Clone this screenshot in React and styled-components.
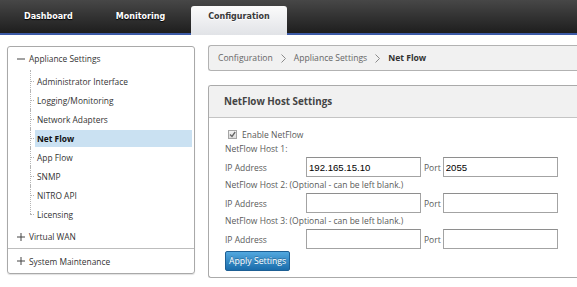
import React from "react";
import styled, { createGlobalStyle } from "styled-components";

const GlobalStyle = createGlobalStyle`
  body {
    margin: 0;
    overflow: hidden;
    background: #ffffff;
    font-family: "Open Sans", "Noto Sans", sans-serif;
  }
`;

const TopBar = styled.div`
  height: 33px;
  border-bottom: 2px solid #3c5aa6;
  background: linear-gradient(#474747, #1e1e1e);
  display: flex;
  align-items: flex-end;
  gap: 9px;
  padding-left: 7px;
`;

const Tab = styled.div`
  height: 22px;
  line-height: 22px;
  padding: 0 17px 7px;
  margin-bottom: -2px;
  font-family: "DejaVu Sans", Verdana, sans-serif;
  font-weight: bold;
  font-size: 8px;
  color: ${(p) => (p.active ? "#3a3a3a" : "#ffffff")};
  border-radius: 3px 3px 0 0;
  background: ${(p) => (p.active ? "linear-gradient(#fbfbfb, #e1e3e7)" : "transparent")};
  text-shadow: ${(p) => (p.active ? "0 1px 0 #ffffff" : "0 1px 1px #000000")};
`;

const Page = styled.div`
  display: flex;
  align-items: flex-start;
  gap: 13px;
  padding: 10px 0 0 7px;
`;

const Sidebar = styled.div`
  box-sizing: border-box;
  flex: 0 0 188px;
  margin-top: 1px;
  border: 1px solid #a9a9a9;
  border-radius: 3px;
  box-shadow: 0 1px 1px rgba(0, 0, 0, 0.12);
  font-size: 8.4px;
  color: #333333;
`;

const GroupRow = styled.div`
  height: ${(p) => p.h}px;
  display: flex;
  align-items: center;
  gap: 4px;
  padding-left: 9px;
  border-bottom: ${(p) => (p.divider ? "1px solid #bdbdbd" : "none")};
`;

const TreeList = styled.div`
  margin: 3px 0 2px;
`;

const TreeItem = styled.div`
  position: relative;
  height: 17px;
  line-height: 17px;
  margin: 0 2px 2px 27px;
  padding-left: 2px;
  background: ${(p) => (p.selected ? "#cae1f2" : "transparent")};
  font-weight: ${(p) => (p.selected ? "bold" : "normal")};
  color: ${(p) => (p.selected ? "#111111" : "#333333")};

  &:last-child {
    margin-bottom: 0;
  }

  &::before {
    content: "";
    position: absolute;
    left: -5px;
    top: -3px;
    height: ${(p) => (p.last ? "11px" : "22px")};
    border-left: 1px dotted #b5b5b5;
  }

  &::after {
    content: "";
    position: absolute;
    left: -5px;
    top: 8px;
    width: 4px;
    border-top: 1px dotted #b5b5b5;
  }
`;

const Main = styled.div`
  flex: 1 1 auto;
  min-width: 0;
`;

const Breadcrumb = styled.div`
  box-sizing: border-box;
  height: 26px;
  border: 1px solid #b2b2b2;
  border-right: none;
  border-radius: 3px 0 0 3px;
  background: #f1f1f1;
  display: flex;
  align-items: center;
  gap: 8px;
  padding-left: 9px;
  font-size: 8.6px;
  color: #666666;
`;

const Crumb = styled.span`
  font-weight: ${(p) => (p.current ? "bold" : "normal")};
  color: ${(p) => (p.current ? "#333333" : "#666666")};
`;

const Panel = styled.div`
  margin-top: 14px;
  border: 1px solid #aaaaaa;
  border-right: none;
  border-radius: 3px 0 0 3px;
  overflow: hidden;
`;

const PanelHeader = styled.div`
  height: 31px;
  line-height: 31px;
  padding-left: 15px;
  background: #f1f1f1;
  border-bottom: 1px solid #c4c4c4;
  font-size: 9.8px;
  font-weight: bold;
  color: #444444;
`;

const PanelBody = styled.div`
  padding: 9px 0 6px 16px;
  font-size: 8.5px;
  color: #5a5a5a;
`;

const CheckRow = styled.label`
  height: 14px;
  display: flex;
  align-items: center;
  gap: 5px;
  padding-left: 3px;
`;

const CheckBox = styled.span`
  box-sizing: border-box;
  width: 9px;
  height: 9px;
  border: 1px solid #a5a5a5;
  background: linear-gradient(#f4f4f4, #dcdcdc);
  display: flex;
  align-items: center;
  justify-content: center;
`;

const HostLabel = styled.div`
  height: 16px;
  line-height: 16px;
`;

const FieldRow = styled.div`
  height: 20px;
  display: flex;
  align-items: center;
`;

const FieldLabel = styled.span`
  width: 81px;
`;

const PortLabel = styled.span`
  margin: 0 2px 0 3px;
`;

const Input = styled.input`
  box-sizing: border-box;
  width: 115px;
  height: 20px;
  margin: 0;
  padding: 0 2px;
  border: 1px solid #a3a3a3;
  border-top-color: #8e8e8e;
  background: #ffffff;
  font-family: "Liberation Sans", Arial, sans-serif;
  font-size: 9.6px;
  color: #000000;
  outline: none;
`;

const ApplyButton = styled.button`
  margin-top: 2px;
  height: 20px;
  padding: 0 3px;
  border: 1px solid #1d5f94;
  border-radius: 2px;
  background: linear-gradient(#52a8df, #1a6cab);
  color: #ffffff;
  font-family: "Open Sans", sans-serif;
  font-size: 8.7px;
  text-shadow: 0 -1px 0 rgba(0, 0, 0, 0.25);
`;

const Minus = () => (
  <svg width="8" height="8" viewBox="0 0 8 8">
    <line x1="0" y1="4" x2="8" y2="4" stroke="#444" strokeWidth="1" />
  </svg>
);

const Plus = () => (
  <svg width="8" height="8" viewBox="0 0 8 8">
    <line x1="0" y1="4" x2="8" y2="4" stroke="#444" strokeWidth="1" />
    <line x1="4" y1="0" x2="4" y2="8" stroke="#444" strokeWidth="1" />
  </svg>
);

const Chevron = () => (
  <svg width="5" height="9" viewBox="0 0 5 9">
    <polyline points="0.5,0.5 4.5,4.5 0.5,8.5" fill="none" stroke="#8a8a8a" strokeWidth="1" />
  </svg>
);

const Check = () => (
  <svg width="7" height="7" viewBox="0 0 7 7">
    <polyline points="1,3.5 3,5.5 6.2,1" fill="none" stroke="#666" strokeWidth="1.3" />
  </svg>
);

const items = [
  "Administrator Interface",
  "Logging/Monitoring",
  "Network Adapters",
  "Net Flow",
  "App Flow",
  "SNMP",
  "NITRO API",
  "Licensing",
];

const hosts = [
  { label: "NetFlow Host 1:", ip: "192.165.15.10", port: "2055" },
  { label: "NetFlow Host 2: (Optional - can be left blank.)", ip: "", port: "" },
  { label: "NetFlow Host 3: (Optional - can be left blank.)", ip: "", port: "" },
];

const App = () => {
  return (
    <>
      <GlobalStyle />
      <TopBar>
        <Tab>Dashboard</Tab>
        <Tab>Monitoring</Tab>
        <Tab active>Configuration</Tab>
      </TopBar>
      <Page>
        <Sidebar>
          <GroupRow h={23}>
            <Minus />
            Appliance Settings
          </GroupRow>
          <TreeList>
            {items.map((item, i) => (
              <TreeItem key={item} selected={item === "Net Flow"} last={i === items.length - 1}>
                {item}
              </TreeItem>
            ))}
          </TreeList>
          <GroupRow h={23} divider>
            <Plus />
            Virtual WAN
          </GroupRow>
          <GroupRow h={24}>
            <Plus />
            System Maintenance
          </GroupRow>
        </Sidebar>
        <Main>
          <Breadcrumb>
            <Crumb>Configuration</Crumb>
            <Chevron />
            <Crumb>Appliance Settings</Crumb>
            <Chevron />
            <Crumb current>Net Flow</Crumb>
          </Breadcrumb>
          <Panel>
            <PanelHeader>NetFlow Host Settings</PanelHeader>
            <PanelBody>
              <CheckRow>
                <CheckBox>
                  <Check />
                </CheckBox>
                Enable NetFlow
              </CheckRow>
              {hosts.map((h) => (
                <React.Fragment key={h.label}>
                  <HostLabel>{h.label}</HostLabel>
                  <FieldRow>
                    <FieldLabel>IP Address</FieldLabel>
                    <Input defaultValue={h.ip} />
                    <PortLabel>Port</PortLabel>
                    <Input defaultValue={h.port} />
                  </FieldRow>
                </React.Fragment>
              ))}
              <ApplyButton>Apply Settings</ApplyButton>
            </PanelBody>
          </Panel>
        </Main>
      </Page>
    </>
  );
};

export default App;
